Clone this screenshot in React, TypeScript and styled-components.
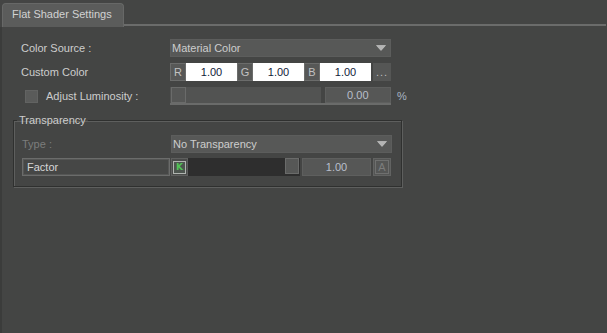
import React from "react";
import styled, { createGlobalStyle } from "styled-components";

const Global = createGlobalStyle`
  html, body { margin: 0; padding: 0; background: #444544; }
  body { font-family: "Liberation Sans", Arial, sans-serif; font-size: 11px; color: #c9c9c9; }
  * { box-sizing: border-box; }
`;

const Page = styled.div`
  width: 607px;
  height: 333px;
  background: #444544;
  display: flex;
  flex-direction: column;
`;

const TabBar = styled.div`
  height: 27px;
  display: flex;
  align-items: flex-end;
  padding: 3px 1px 0 2px;
`;

const Tab = styled.div`
  width: 122px;
  height: 24px;
  background: #5b5c5b;
  border: 1px solid #676867;
  border-bottom: none;
  border-radius: 4px 4px 0 0;
  padding: 4px 0 0 9px;
  font-size: 11px;
  color: #d2d2d2;
`;

const TabLine = styled.div`
  flex: 1;
  height: 2px;
  margin-bottom: 1px;
  background: #6b6c6b;
`;

const Panel = styled.div`
  flex: 1;
  border-left: 2px solid #3b3c3b;
  padding: 12px 0 0 0;
  display: flex;
  flex-direction: column;
`;

const Row = styled.div<{ $mb?: number }>`
  display: grid;
  grid-template-columns: 149px 221px auto;
  align-items: center;
  height: 18px;
  margin-bottom: ${(p) => p.$mb ?? 6}px;
  padding-left: 19px;
`;

const Label = styled.div<{ $dim?: boolean }>`
  color: ${(p) => (p.$dim ? "#7c7d7c" : "#cdcdcd")};
  white-space: nowrap;
  display: flex;
  align-items: center;
`;

const Check = styled.span`
  width: 13px;
  height: 13px;
  background: #5a5b5a;
  border: 1px solid #626362;
  margin: 0 8px 0 4px;
`;

const Dropdown = styled.div`
  height: 18px;
  background: #575857;
  border: 1px solid #5c5d5c;
  display: flex;
  align-items: center;
  justify-content: space-between;
  padding: 0 4px 0 1px;
  color: #cdcdcd;
`;

const Controls = styled.div`
  height: 18px;
  display: flex;
  align-items: stretch;
`;

const Chan = styled.div`
  width: 16px;
  background: #575857;
  border: 1px solid #6b6c6b;
  color: #c2c2c2;
  display: flex;
  align-items: center;
  justify-content: center;
`;

const WhiteField = styled.div`
  flex: 1;
  background: #ffffff;
  color: #111a3a;
  display: flex;
  align-items: center;
  justify-content: center;
`;

const SmallBtn = styled.div<{ $gap?: number }>`
  width: 18px;
  margin-left: ${(p) => p.$gap ?? 2}px;
  background: #555655;
  color: #bdbdbd;
  display: flex;
  align-items: center;
  justify-content: center;
  letter-spacing: 1px;
`;

const SliderWrap = styled.div`
  height: 18px;
  display: flex;
  border-bottom: 2px solid #6a6b6a;
`;

const Track = styled.div<{ $w: number; $dark?: boolean }>`
  width: ${(p) => p.$w}px;
  background: ${(p) => (p.$dark ? "#2e2e2e" : "#525352")};
  display: flex;
  justify-content: ${(p) => (p.$dark ? "flex-end" : "flex-start")};
  padding: 0 1px;
`;

const Thumb = styled.div<{ $w?: number }>`
  width: ${(p) => p.$w ?? 15}px;
  height: 16px;
  background: #565756;
  border: 1px solid #6a6b6a;
`;

const ValueField = styled.div<{ $w: number }>`
  width: ${(p) => p.$w}px;
  margin-left: ${(p) => (p.$w > 67 ? 2 : 4)}px;
  background: #565756;
  border: 1px solid #5e5f5e;
  color: #b9bfcb;
  display: flex;
  align-items: center;
  justify-content: center;
`;

const Percent = styled.span`
  color: #a9b6c6;
  padding-left: 6px;
`;

const Group = styled.fieldset`
  margin: 9px 0 0 11px;
  width: 389px;
  padding: 8px 8px 10px 8px;
  border: 1px solid #2f302f;
  box-shadow: inset 1px 1px 0 #5e5f5e, 1px 1px 0 #5e5f5e;
  min-width: 0;
`;

const Legend = styled.legend`
  padding: 0 2px;
  margin-left: -5px;
  color: #cdcdcd;
  line-height: 13px;
`;

const GroupRow = styled.div<{ $mb?: number }>`
  display: grid;
  grid-template-columns: 149px 221px;
  align-items: center;
  height: 18px;
  margin-bottom: ${(p) => p.$mb ?? 0}px;
`;

const FactorField = styled.div`
  width: 148px;
  height: 18px;
  border: 1px solid #6b6c6b;
  box-shadow: inset 0 0 0 1px #555655;
  background: #464746;
  color: #d6d6d6;
  padding-left: 4px;
  display: flex;
  align-items: center;
`;

const KBtn = styled.div`
  width: 17px;
  height: 18px;
  background: #4a4b4a;
  border: 1px solid #5e5f5e;
  display: flex;
  align-items: center;
  justify-content: center;
`;

const KInner = styled.div`
  width: 13px;
  height: 13px;
  background: #4d554f;
  border: 1px solid #b0b4b0;
  color: #52c456;
  font-family: "DejaVu Sans", sans-serif;
  font-size: 9px;
  font-weight: bold;
  display: flex;
  align-items: center;
  justify-content: center;
  line-height: 11px;
`;

const ABtn = styled.div`
  width: 18px;
  height: 18px;
  margin-left: 2px;
  background: #555655;
  border: 1px solid #626362;
  display: flex;
  align-items: center;
  justify-content: center;
`;

const AInner = styled.div`
  width: 14px;
  height: 14px;
  border: 1px solid #6f706f;
  color: #7c7d7c;
  font-size: 11px;
  display: flex;
  align-items: center;
  justify-content: center;
  line-height: 1;
`;

const Arrow = () => (
  <svg width="10" height="6" viewBox="0 0 10 6">
    <polygon points="0.5,0.5 9.5,0.5 5,5.5" fill="#b4b4b4" stroke="#d8d8d8" strokeWidth="0.5" />
  </svg>
);

export default function App() {
  return (
    <Page>
      <Global />
      <TabBar>
        <Tab>Flat Shader Settings</Tab>
        <TabLine />
      </TabBar>
      <Panel>
        <Row>
          <Label>Color Source :</Label>
          <Dropdown>
            <span>Material Color</span>
            <Arrow />
          </Dropdown>
        </Row>
        <Row>
          <Label>Custom Color</Label>
          <Controls>
            <Chan>R</Chan>
            <WhiteField>1.00</WhiteField>
            <Chan>G</Chan>
            <WhiteField>1.00</WhiteField>
            <Chan>B</Chan>
            <WhiteField>1.00</WhiteField>
            <SmallBtn>...</SmallBtn>
          </Controls>
        </Row>
        <Row $mb={0}>
          <Label>
            <Check />
            Adjust Luminosity :
          </Label>
          <SliderWrap>
            <Track $w={152}>
              <Thumb />
            </Track>
            <ValueField $w={67}>0.00</ValueField>
          </SliderWrap>
          <Percent>%</Percent>
        </Row>
        <Group>
          <Legend>Transparency</Legend>
          <GroupRow $mb={5}>
            <Label $dim>Type :</Label>
            <Dropdown>
              <span>No Transparency</span>
              <Arrow />
            </Dropdown>
          </GroupRow>
          <GroupRow>
            <FactorField>Factor</FactorField>
            <Controls>
              <KBtn>
                <KInner>K</KInner>
              </KBtn>
              <Track $w={112} $dark>
                <Thumb $w={14} />
              </Track>
              <ValueField $w={69}>1.00</ValueField>
              <ABtn>
                <AInner>A</AInner>
              </ABtn>
            </Controls>
          </GroupRow>
        </Group>
      </Panel>
    </Page>
  );
}
